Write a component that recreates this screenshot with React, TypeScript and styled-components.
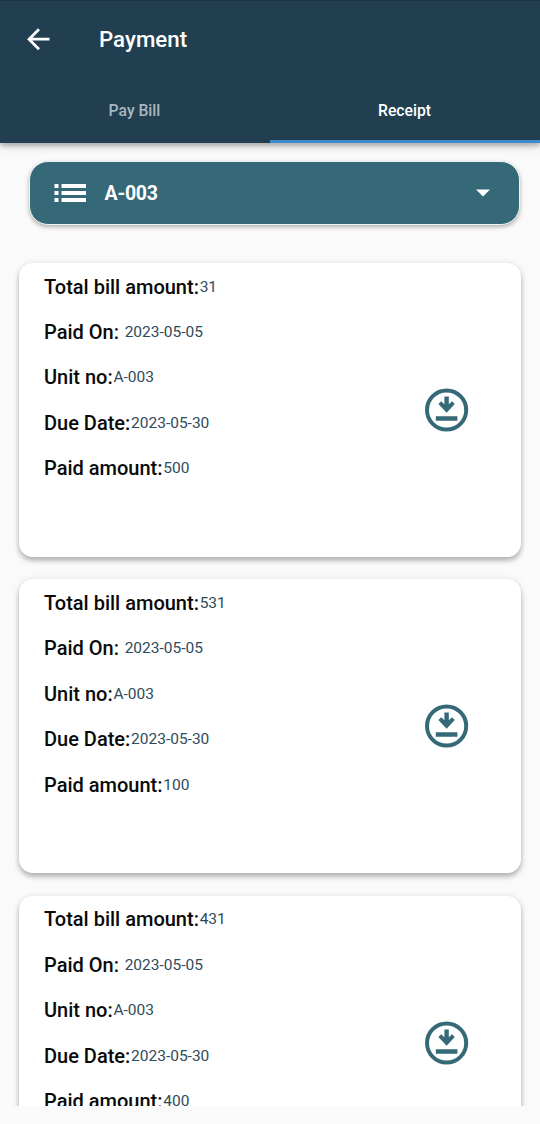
import React from "react";
import styled, { createGlobalStyle } from "styled-components";

const GlobalStyle = createGlobalStyle`
  * { box-sizing: border-box; }
  body { margin: 0; background: #fafafa; font-family: Roboto, "Liberation Sans", sans-serif; }
`;

const Screen = styled.div`
  height: 1124px;
  overflow: hidden;
  display: flex;
  flex-direction: column;
  background: #fafafa;
`;

const Header = styled.header`
  flex: none;
  height: 143px;
  display: flex;
  flex-direction: column;
  background: #213f50;
  border-top: 1px solid #1b3544;
  box-shadow: 0 3px 4px rgba(0, 0, 0, 0.2), 0 4px 9px rgba(0, 0, 0, 0.14);
`;

const TitleBar = styled.div`
  height: 76px;
  padding-left: 27px;
  display: flex;
  align-items: center;
`;

const BackIcon = styled.svg`
  width: 23px;
  height: 23px;
`;

const Title = styled.h1`
  margin: 0 0 0 49px;
  font-size: 22.3px;
  font-weight: 500;
  line-height: 30px;
  color: #fff;
`;

const Tabs = styled.nav`
  flex: 1;
  display: flex;
`;

const Tab = styled.div<{ $active?: boolean }>`
  flex: 1;
  padding: 4px 1px 0 0;
  display: flex;
  align-items: center;
  justify-content: center;
  font-size: 15.7px;
  font-weight: 500;
  color: ${(p) => (p.$active ? "#fff" : "#a9b6c0")};
  border-bottom: 3px solid ${(p) => (p.$active ? "#3a8bd0" : "transparent")};
`;

const UnitSelect = styled.div`
  flex: none;
  height: 64px;
  margin: 18px 20px 0 29px;
  padding: 0 29px 0 24px;
  display: flex;
  align-items: center;
  background: #366977;
  border: 1px solid #e9f4f6;
  border-radius: 19px;
  box-shadow: 0 2px 4px rgba(0, 0, 0, 0.3);
`;

const ListIcon = styled.svg`
  width: 32px;
  height: 20px;
`;

const UnitName = styled.span`
  flex: 1;
  margin-left: 18.5px;
  font-size: 19.5px;
  letter-spacing: -0.2px;
  font-weight: 700;
  color: #fff;
`;

const Caret = styled.svg`
  width: 14px;
  height: 8px;
`;

const List = styled.main`
  flex: none;
  height: 881px;
  padding: 38px 19px 0;
  display: flex;
  flex-direction: column;
  gap: 22.4px;
  overflow: hidden;
`;

const Card = styled.article`
  flex: none;
  height: 294px;
  padding: 1px 52.5px 0 25px;
  display: flex;
  justify-content: space-between;
  background: #fff;
  border-radius: 14px;
  box-shadow: 0 4px 5px rgba(0, 0, 0, 0.22), 0 1px 7px rgba(0, 0, 0, 0.13);
`;

const Details = styled.dl`
  margin: 0;
`;

const Row = styled.div`
  height: 45.4px;
  display: flex;
  align-items: center;
  white-space: pre;
`;

const Label = styled.dt`
  font-size: 20px;
  font-weight: 500;
  line-height: 24px;
  color: #0a0a0a;
`;

const Value = styled.dd`
  margin: 0 0 0 0.7px;
  font-size: 15.5px;
  line-height: 24px;
  color: #2f4a5a;
`;

const DownloadIcon = styled.svg`
  width: 44px;
  height: 44px;
  margin-top: 124px;
`;

const receipts = [
  { total: "31", paid: "500" },
  { total: "531", paid: "100" },
  { total: "431", paid: "400" },
];

function Field({ label, value }: { label: string; value: string }) {
  return (
    <Row>
      <Label>{label}</Label>
      <Value>{value}</Value>
    </Row>
  );
}

export default function App() {
  return (
    <>
      <GlobalStyle />
      <Screen>
        <Header>
          <TitleBar>
            <BackIcon viewBox="0 0 23 23" fill="none" stroke="#fff" strokeWidth="2.7">
              <path d="M22.5 11.2H2.5M12 1.2L2 11.2L12 21.2" />
            </BackIcon>
            <Title>Payment</Title>
          </TitleBar>
          <Tabs>
            <Tab>Pay Bill</Tab>
            <Tab $active>Receipt</Tab>
          </Tabs>
        </Header>
        <UnitSelect>
          <ListIcon viewBox="0 0 32 20" fill="#fff">
            <path d="M.5 1h4v4h-4zM.5 8h4v4h-4zM.5 15h4v4h-4zM7.5 1H32v4H7.5zM7.5 8H32v4H7.5zM7.5 15H32v4H7.5z" />
          </ListIcon>
          <UnitName>A-003</UnitName>
          <Caret viewBox="0 0 14 8" fill="#fff">
            <path d="M0 .5h14L7 7.5z" />
          </Caret>
        </UnitSelect>
        <List>
          {receipts.map((r) => (
            <Card key={r.total}>
              <Details>
                <Field label="Total bill amount:" value={r.total} />
                <Field label="Paid On: " value="2023-05-05" />
                <Field label="Unit no:" value="A-003" />
                <Field label="Due Date:" value="2023-05-30" />
                <Field label="Paid amount:" value={r.paid} />
              </Details>
              <DownloadIcon viewBox="0 0 44 44" fill="#366977">
                <circle cx="21.6" cy="22" r="19.6" fill="none" stroke="#366977" strokeWidth="4" />
                <path d="M19.4 8.5h4.4v7.8l3.2-3.1 2.8 2.8L21.6 24.7 13.4 16l2.8-2.8 3.2 3.1zM10.8 28.3h21.6v4.4H10.8z" />
              </DownloadIcon>
            </Card>
          ))}
        </List>
      </Screen>
    </>
  );
}
